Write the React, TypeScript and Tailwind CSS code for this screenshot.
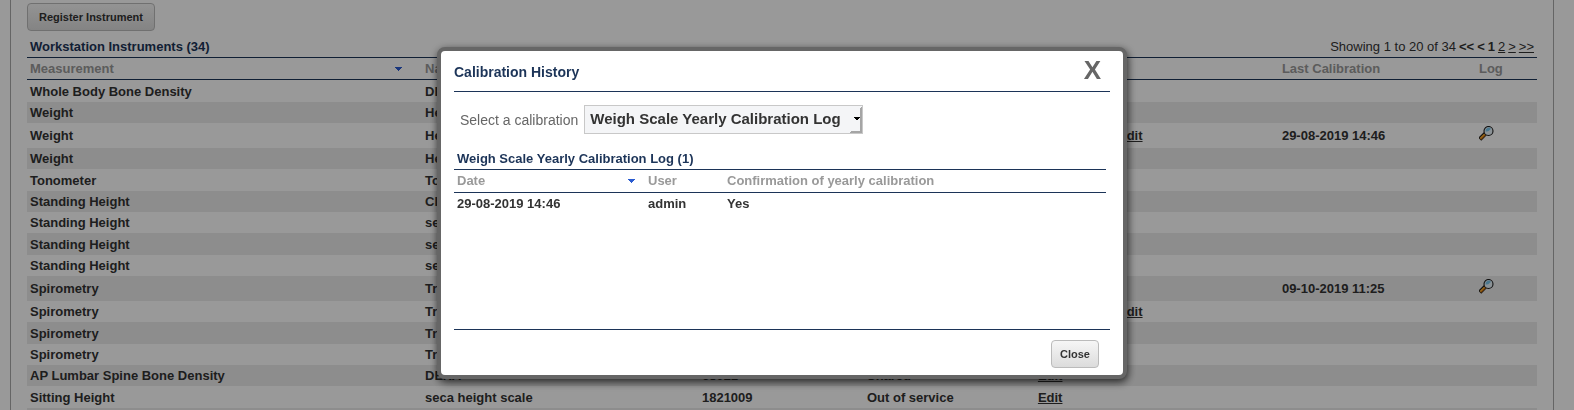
import React from "react";

type Row = {
  measurement?: string;
  name?: string;
  serial?: string;
  status?: string;
  edit?: "plain" | "recalibrate";
  last?: string;
  height: string;
};

const H21 = "h-[21px]";
const H22 = "h-[22px]";
const H25 = "h-[25px]";

const rows: Row[] = [
  { measurement: "Whole Body Bone Density", name: "DEXA", height: H22 },
  { measurement: "Weight", name: "Health", height: H21 },
  { measurement: "Weight", name: "Health", edit: "recalibrate", last: "29-08-2019 14:46", height: H25 },
  { measurement: "Weight", name: "Health", height: H21 },
  { measurement: "Tonometer", name: "Tono", height: H22 },
  { measurement: "Standing Height", name: "CL", height: H21 },
  { measurement: "Standing Height", name: "seca", height: H21 },
  { measurement: "Standing Height", name: "seca", height: H22 },
  { measurement: "Standing Height", name: "seca", height: H21 },
  { measurement: "Spirometry", name: "True", last: "09-10-2019 11:25", height: H25 },
  { measurement: "Spirometry", name: "True", edit: "recalibrate", height: H21 },
  { measurement: "Spirometry", name: "True", height: H22 },
  { measurement: "Spirometry", name: "True", height: H21 },
  { measurement: "AP Lumbar Spine Bone Density", name: "DEXA", serial: "68021", status: "Shared", edit: "plain", height: H21 },
  { measurement: "Sitting Height", name: "seca height scale", serial: "1821009", status: "Out of service", edit: "plain", height: H22 },
  { height: H21 },
];

const buttonClass =
  "rounded border border-[#bbb] bg-linear-to-b from-[#f6f6f6] to-[#dcdcdc] h-7 text-[11px] font-bold text-[#333]";

const cellClass = "px-[3px] pt-[2px]";

function SortArrow() {
  return (
    <svg width="7" height="4" viewBox="0 0 7 4" shapeRendering="crispEdges" aria-hidden="true">
      <path d="M0 0h7v1H6v1H5v1H4v1H3V3H2V2H1V1H0z" fill="#2a5bd0" />
    </svg>
  );
}

function Magnifier() {
  return (
    <svg width="15" height="15" viewBox="0 0 15 15" aria-hidden="true">
      <path d="M0.800 13.200 L6.200 7.800" stroke="#1c1c1c" strokeWidth="4.200" />
      <path d="M1.200 12.600 L6 7.800" stroke="#ffb02e" strokeWidth="1.600" />
      <path d="M1.800 13.400 L6.600 8.600" stroke="#d9780f" strokeWidth="1.200" />
      <circle cx="9.500" cy="5" r="4.500" fill="#e8f3fa" stroke="#1c1c1c" strokeWidth="1.100" />
      <path d="M6.600 5.400a3 3 0 0 1 5.400-2.400c-1.400 .4-2.200 3.200-5.400 2.400z" fill="#7cc8ee" />
    </svg>
  );
}

function Instruments() {
  return (
    <main className="mr-5 ml-[10px] border-x border-[#a9a9a9] px-4 pt-[3px]">
      <button className={`${buttonClass} px-[11px]`}>Register Instrument</button>
      <div className="flex h-[26px] items-center justify-between px-[3px] pt-[6px]">
        <h1 className="font-bold text-[#1c3458]">Workstation Instruments (34)</h1>
        <nav className="flex gap-[3px]" aria-label="Pages">
          <span>Showing 1 to 20 of 34</span>
          <b>&lt;&lt;</b>
          <b>&lt;</b>
          <b>1</b>
          <a href="#2" className="underline">2</a>
          <a href="#next" className="underline">&gt;</a>
          <a href="#last" className="underline">&gt;&gt;</a>
        </nav>
      </div>
      <table className="w-full table-fixed border-collapse text-left font-bold">
        <thead className="border-y border-[#1c3458] text-[#999]">
          <tr className="h-[22px]">
            <th className="w-[26.16%] px-[3px]">
              <span className="flex items-center justify-between pr-[17px]">
                Measurement
                <SortArrow />
              </span>
            </th>
            <th className="w-[18.34%] px-[3px]">Name</th>
            <th className="w-[10.93%] px-[3px]">Serial</th>
            <th className="w-[11.32%] px-[3px]">Status</th>
            <th className="w-[16.16%] px-[3px]"></th>
            <th className="w-[13.05%] px-[3px]">Last Calibration</th>
            <th className="px-[3px]">Log</th>
          </tr>
        </thead>
        <tbody>
          {rows.map((r, i) => (
            <tr key={i} className={`${r.height} even:bg-[#ececec]`}>
              <td className={cellClass}>{r.measurement}</td>
              <td className={cellClass}>{r.name}</td>
              <td className={cellClass}>{r.serial}</td>
              <td className={cellClass}>{r.status}</td>
              <td className={cellClass}>
                <span className="flex gap-2.5">
                  {r.edit === "recalibrate" && <a href="#recalibrate" className="underline">Recalibrate</a>}
                  {r.edit && <a href="#edit" className="underline">Edit</a>}
                </span>
              </td>
              <td className={cellClass}>{r.last}</td>
              <td className={cellClass}>
                {r.last && (
                  <a href="#log" aria-label="Calibration log" className="flex pb-[5px]">
                    <Magnifier />
                  </a>
                )}
              </td>
            </tr>
          ))}
        </tbody>
      </table>
    </main>
  );
}

function CalibrationDialog() {
  return (
    <section
      role="dialog"
      aria-labelledby="dialog-title"
      className="w-[690px] max-w-full rounded-lg border-4 border-[#666] bg-white px-[13px] pb-[7px] shadow-[1px_3px_8px_rgba(0,0,0,0.75)]"
    >
      <header className="flex h-[41px] items-center justify-between border-b border-[#1c3458] pr-[9px]">
        <h2 id="dialog-title" className="pt-[2px] text-[14px] font-bold text-[#1c3458]">Calibration History</h2>
        <button aria-label="Close dialog" className="pb-[2px] text-[26px] leading-6 font-bold text-[#666]">X</button>
      </header>
      <div className="flex items-center gap-[6px] pt-[13px] pl-[6px] text-[14px] text-[#666]">
        <label htmlFor="calibration">Select a calibration</label>
        <span className="relative flex">
          <select
            id="calibration"
            className="h-[29px] w-[279px] appearance-none border border-[#c8c8c8] bg-[#f4f5f7] pb-[2px] pl-[5px] text-[15px] font-bold text-[#333]"
          >
            <option>Weigh Scale Yearly Calibration Log</option>
          </select>
          <svg className="pointer-events-none absolute top-px right-px" width="12" height="27" viewBox="0 0 12 27" shapeRendering="crispEdges" aria-hidden="true">
            <path d="M11 1h1v26H0v-1h1v-1h9V2h1z" fill="#a5a5a5" />
            <path d="M4 11h6v1H9v1H8v1H6v-1H5v-1H4z" fill="#000" />
          </svg>
        </span>
      </div>
      <div className="mr-1 min-h-[195px] pt-[15px]">
        <table className="w-full table-fixed border-collapse text-left font-bold">
          <caption className="h-5 px-[3px] text-left leading-5 font-bold text-[#1c3458]">
            Weigh Scale Yearly Calibration Log (1)
          </caption>
          <thead className="border-y border-[#1c3458] text-[#999]">
            <tr className="h-[23px]">
              <th className="w-[191px] px-[3px]">
                <span className="flex items-center justify-between pr-[7px]">
                  Date
                  <SortArrow />
                </span>
              </th>
              <th className="w-[79px] px-[3px]">User</th>
              <th className="px-[3px]">Confirmation of yearly calibration</th>
            </tr>
          </thead>
          <tbody>
            <tr className="h-[22px]">
              <td className="px-[3px]">29-08-2019 14:46</td>
              <td className="px-[3px]">admin</td>
              <td className="px-[3px]">Yes</td>
            </tr>
          </tbody>
        </table>
      </div>
      <footer className="flex justify-end border-t border-[#1c3458] pt-[10px] pr-[11px]">
        <button className={`${buttonClass} px-2`}>Close</button>
      </footer>
    </section>
  );
}

export default function App() {
  return (
    <div className="h-screen overflow-hidden bg-white font-['Liberation_Sans',Arial,sans-serif] text-[13px] leading-4 text-[#333]">
      <Instruments />
      <div className="fixed inset-0 flex items-start justify-center bg-black/40 pt-[47px] pr-[10px]">
        <CalibrationDialog />
      </div>
    </div>
  );
}
